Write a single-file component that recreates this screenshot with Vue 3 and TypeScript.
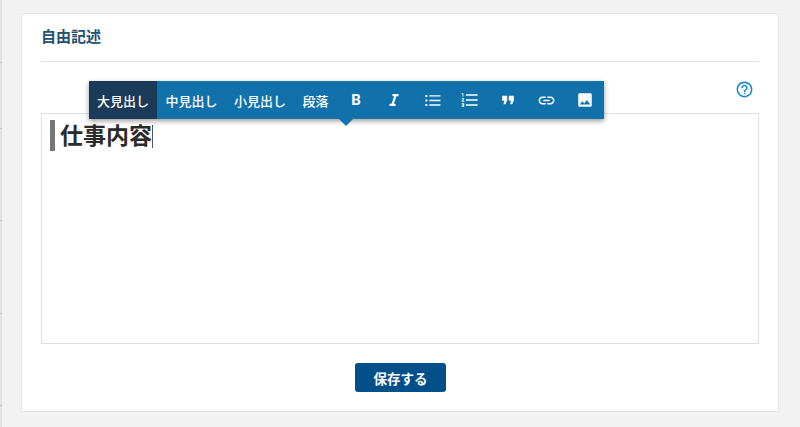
<template>
  <div class="page">
    <div class="side-lines">
      <i v-for="top in sideTicks" :key="top" class="tick" :style="{ top: top + 'px' }"></i>
    </div>
    <section class="card">
      <h2 class="card-title">自由記述</h2>
      <div class="editor-head">
        <a class="help" aria-label="ヘルプ">
          <svg width="19" height="19" viewBox="0 0 24 24" fill="#1a8ad0">
            <path d="M11 18h2v-2h-2v2zm1-16C6.48 2 2 6.48 2 12s4.48 10 10 10 10-4.48 10-10S17.52 2 12 2zm0 18c-4.41 0-8-3.59-8-8s3.59-8 8-8 8 3.59 8 8-3.59 8-8 8zm0-14c-2.21 0-4 1.79-4 4h2c0-1.1.9-2 2-2s2 .9 2 2c0 2-3 1.75-3 5h2c0-2.25 3-2.5 3-5 0-2.21-1.79-4-4-4z" />
          </svg>
        </a>
      </div>
      <div class="editor">
        <div class="toolbar">
          <button
            v-for="item in headings"
            :key="item.label"
            class="tool text"
            :class="{ active: item.active }"
          >{{ item.label }}</button>
          <button class="tool icon bold">B</button>
          <button class="tool icon italic">
            <svg width="18" height="18" viewBox="0 0 24 24" fill="#fff"><path d="M10 4v3h2.200l-3.400 10H6v3h8v-3h-2.200l3.400-10H18V4z" /></svg>
          </button>
          <button class="tool icon">
            <svg width="19" height="19" viewBox="0 0 24 24" fill="#fff"><path d="M3 5h2.500v2.500H3zM3 10.800h2.500v2.500H3zM3 16.500h2.500V19H3zM8 5.300h14v1.800H8zM8 11h14v1.800H8zM8 16.800h14v1.800H8z" /></svg>
          </button>
          <button class="tool icon">
            <svg width="20" height="20" viewBox="0 0 24 24" fill="#fff"><path d="M2 17h2v.5H3v1h1v.5H2v1h3v-4H2v1zm1-9h1V4H2v1h1v3zm-1 3h1.800L2 13.100v.9h3v-1H3.200L5 10.900V10H2v1zm5-6v2h14V5H7zm0 14h14v-2H7v2zm0-6h14v-2H7v2z" /></svg>
          </button>
          <button class="tool icon">
            <svg width="20" height="20" viewBox="0 0 24 24" fill="#fff"><path d="M5 7h6v5.500L9 17H6.500l1.200-4H5zM13 7h6v5.500L17 17h-2.500l1.200-4H13z" /></svg>
          </button>
          <button class="tool icon">
            <svg width="19" height="19" viewBox="0 0 24 24" fill="#fff"><path d="M3.900 12c0-1.710 1.390-3.100 3.100-3.100h4V7H7c-2.760 0-5 2.240-5 5s2.240 5 5 5h4v-1.900H7c-1.710 0-3.100-1.390-3.100-3.100zM8 13h8v-2H8v2zm9-6h-4v1.900h4c1.710 0 3.100 1.390 3.100 3.100s-1.390 3.100-3.100 3.100h-4V17h4c2.760 0 5-2.240 5-5s-2.240-5-5-5z" /></svg>
          </button>
          <button class="tool icon last">
            <svg width="18" height="18" viewBox="0 0 24 24" fill="#fff"><path d="M21 19V5c0-1.100-.9-2-2-2H5c-1.100 0-2 .9-2 2v14c0 1.100.9 2 2 2h14c1.100 0 2-.9 2-2zM8.500 13.500l2.500 3.010L14.500 12l4.500 6H5l3.500-4.500z" /></svg>
          </button>
          <span class="arrow"></span>
        </div>
        <h3 class="heading">仕事内容<span class="caret"></span></h3>
      </div>
      <div class="actions">
        <button class="save">保存する</button>
      </div>
    </section>
  </div>
</template>

<script setup lang="ts">
const headings = [
  { label: "大見出し", active: true },
  { label: "中見出し", active: false },
  { label: "小見出し", active: false },
  { label: "段落", active: false },
];

const sideTicks: number[] = [62, 128, 220, 313, 405];
</script>

<style>
html,
body {
  margin: 0;
  background: #f2f2f2;
}
</style>

<style scoped>
.page {
  position: relative;
  box-sizing: border-box;
  height: 427px;
  padding: 13px 21px 15px;
  overflow: hidden;
  background: #f2f2f2;
  font-family: "Liberation Sans", "Noto Sans CJK JP", sans-serif;
}

.side-lines {
  position: absolute;
  top: 0;
  left: 0;
  width: 2px;
  height: 100%;
  background: #e2e2e2;
}

.tick {
  position: absolute;
  left: 0;
  width: 2px;
  height: 1px;
  background: #c8c8c8;
}

.card {
  box-sizing: border-box;
  height: 399px;
  padding: 0 19px;
  background: #fff;
  border: 1px solid #e4e4e4;
}

.card-title {
  height: 47px;
  margin: 0;
  border-bottom: 1px solid #e2e2e2;
  color: #24506f;
  font-size: 15px;
  font-weight: 700;
  line-height: 46px;
}

.editor-head {
  display: flex;
  justify-content: flex-end;
  height: 51px;
  padding: 18px 5px 0 0;
  box-sizing: border-box;
}

.help {
  display: block;
  width: 19px;
  height: 19px;
}

.editor {
  position: relative;
  box-sizing: border-box;
  height: 231px;
  padding: 6px 8px;
  border: 1px solid #e0e0e0;
}

.toolbar {
  position: absolute;
  top: -33px;
  left: 47px;
  display: flex;
  width: 515px;
  height: 38px;
  background: #1172ab;
  box-shadow: 0 2px 5px rgba(0, 0, 0, 0.4);
}

.tool {
  display: flex;
  flex: none;
  align-items: center;
  justify-content: center;
  height: 38px;
  padding: 0;
  border: 0;
  background: transparent;
  color: #fff;
  font-family: inherit;
  font-size: 13px;
  font-weight: 500;
}

.tool.text {
  width: 68px;
}

.tool.text:nth-child(2) {
  width: 69px;
}

.tool.text:nth-child(4) {
  width: 43px;
}

.tool.active {
  background: #1b3a57;
}

.tool.icon {
  width: 38px;
}

.tool.icon.last {
  width: 39px;
}

.tool.bold {
  font-family: Roboto, "Liberation Sans", sans-serif;
  font-size: 15px;
  font-weight: 700;
}

.arrow {
  position: absolute;
  bottom: -7px;
  left: 250px;
  width: 0;
  height: 0;
  border-top: 7px solid #1172ab;
  border-right: 7px solid transparent;
  border-left: 7px solid transparent;
}

.heading {
  display: flex;
  box-sizing: border-box;
  align-items: center;
  height: 31px;
  margin: 0;
  padding: 2px 0 0 5px;
  border-left: 5px solid #777;
  color: #2b2b2b;
  font-size: 23px;
  font-weight: 700;
  line-height: 29px;
}

.caret {
  display: inline-block;
  width: 1px;
  height: 23px;
  background: #555;
}

.actions {
  display: flex;
  justify-content: center;
  padding: 19px 0 0 1px;
}

.save {
  width: 91px;
  height: 29px;
  padding: 0;
  border: 0;
  border-radius: 3px;
  background: #02508a;
  color: #fff;
  font-family: inherit;
  font-size: 13.500px;
  font-weight: 700;
}
</style>
